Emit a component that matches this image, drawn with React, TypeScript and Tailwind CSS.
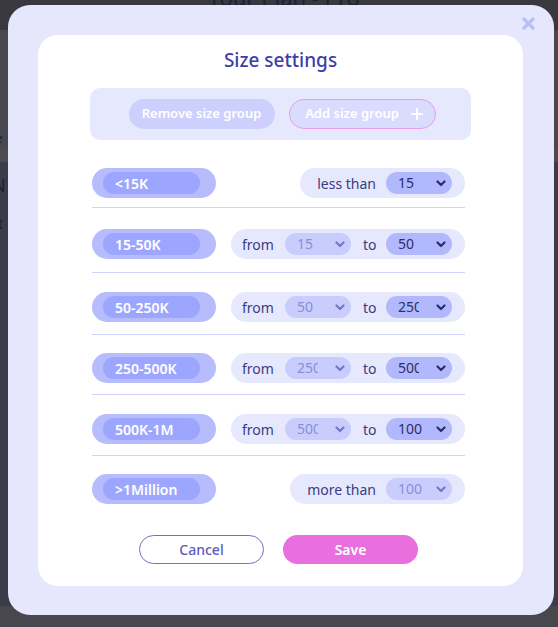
import React from "react";

const font = { fontFamily: '"Noto Sans", "Open Sans", sans-serif' };

function Chevron({ dark }: { dark: boolean }) {
  return (
    <svg width="10" height="7" viewBox="0 0 10 7" className="shrink-0">
      <path
        d="M1.5 1.5 L5 5 L8.5 1.5"
        fill="none"
        stroke={dark ? "#2b2d72" : "#7478cc"}
        strokeWidth="2.2"
        strokeLinecap="round"
        strokeLinejoin="round"
      />
    </svg>
  );
}

function Select({ value, active }: { value: string; active: boolean }) {
  return (
    <div
      className={
        "flex h-[22px] w-[66px] shrink-0 items-center justify-between rounded-full pl-[12px] pr-[6px] " +
        (active ? "bg-[#b2b8fc] text-[#2c2e6e]" : "bg-[#c9cdfd] text-[#8a8ed6]")
      }
    >
      <div
        className={
          "overflow-hidden whitespace-nowrap text-[14px] leading-[22px] " +
          (value === "100" ? "w-[25px]" : "w-[21px]")
        }
      >
        {value}
      </div>
      <Chevron dark={active} />
    </div>
  );
}

function Label({ text }: { text: string }) {
  return (
    <div className="flex h-[30px] w-[124px] shrink-0 items-center rounded-full bg-[#b6bcfc] pl-[11px]">
      <div className="flex h-[22px] w-[97px] items-center rounded-full bg-[#9da6fe] pl-[12px] text-[14px] font-semibold text-white">
        {text}
      </div>
    </div>
  );
}

type Row =
  | { label: string; kind: "less"; to: string; pb: string; mb: string }
  | { label: string; kind: "range"; from: string; to: string; pb: string; mb: string }
  | { label: string; kind: "more"; from: string; pb: string; mb: string };

const rows: Row[] = [
  { label: "<15K", kind: "less", to: "15", pb: "pb-[9px]", mb: "mb-[21px]" },
  { label: "15-50K", kind: "range", from: "15", to: "50", pb: "pb-[13px]", mb: "mb-[19px]" },
  { label: "50-250K", kind: "range", from: "50", to: "250", pb: "pb-[12px]", mb: "mb-[18px]" },
  { label: "250-500K", kind: "range", from: "250", to: "500", pb: "pb-[11px]", mb: "mb-[19px]" },
  { label: "500K-1M", kind: "range", from: "500", to: "100", pb: "pb-[11px]", mb: "mb-[18px]" },
  { label: ">1Million", kind: "more", from: "100", pb: "", mb: "" },
];

function RowView({ row, last }: { row: Row; last: boolean }) {
  return (
    <div className={last ? "" : "border-b border-[#cfd3fb] " + row.pb + " " + row.mb}>
      <div className="flex h-[30px] items-center justify-between">
        <Label text={row.label} />
        {row.kind === "range" ? (
          <div className="flex h-[30px] w-[234px] items-center rounded-full bg-[#e6e8fd] pl-[11px] pr-[13px] text-[14px] text-[#3b3c84]">
            <span className="w-[31px]">from</span>
            <span className="ml-[12px]">
              <Select value={row.from} active={false} />
            </span>
            <span className="ml-[12px] w-[13px]">to</span>
            <span className="ml-[10px]">
              <Select value={row.to} active={true} />
            </span>
          </div>
        ) : (
          <div className="flex h-[30px] items-center rounded-full bg-[#e6e8fd] pl-[17px] pr-[13px] text-[14px] text-[#3b3c84]">
            <span>{row.kind === "less" ? "less than" : "more than"}</span>
            <span className="ml-[10px]">
              {row.kind === "less" ? (
                <Select value={row.to} active={true} />
              ) : (
                <Select value={row.from} active={false} />
              )}
            </span>
          </div>
        )}
      </div>
    </div>
  );
}

export default function App() {
  return (
    <div className="relative h-[627px] w-[558px] overflow-hidden bg-[#47474d]" style={font}>
      {/* background page (dimmed) */}
      <div className="flex h-[30px] justify-center bg-[#38383e]">
        <div className="-mt-[14px] pl-[10px] text-[22px] leading-[22px] text-[#202036]">Your Plan - Pro</div>
      </div>
      <div className="flex flex-col text-[#1e1f3a]">
        <div className="h-[97px]" />
        <div className="-ml-[6px] text-[15px] leading-[20px]">e</div>
        <div className="h-[15px] bg-[#4b4b4f]" />
        <div className="flex h-[444px] flex-col bg-[#3b3c4a] pt-[10px]">
          <div className="-ml-[8px] text-[18px]">N</div>
          <div className="-ml-[2px] mt-[14px] text-[14px]">t</div>
        </div>
      </div>

      {/* modal overlay */}
      <div className="absolute left-[8px] top-[5px] h-[610px] w-[546px] rounded-[22px] bg-[#e6e7fd] pl-[30px] pt-[30px]">
        <div className="absolute right-[19px] top-[12px] text-[#b8befa]">
          <svg width="13" height="13" viewBox="0 0 13 13">
            <path d="M2 2 L11 11 M11 2 L2 11" stroke="#b8befa" strokeWidth="3.2" strokeLinecap="round" />
          </svg>
        </div>
        <div className="flex h-[551px] w-[485px] flex-col rounded-[20px] bg-white pt-[12px]">
          <div className="text-center text-[19px] font-medium leading-[26px] text-[#3d3ea9]">Size settings</div>
          <div className="mx-[52px] mt-[15px] flex h-[52px] items-center justify-center gap-[14px] rounded-[10px] bg-[#e6e8fd] pl-[3px]">
            <div className="flex h-[30px] w-[146px] items-center justify-center rounded-full bg-[#cdd0fc] text-[13px] font-semibold text-white">
              Remove size group
            </div>
            <div className="flex h-[30px] w-[147px] items-center justify-center gap-[12px] rounded-full border border-[#e79de8] bg-[#dadcfd] pl-[4px] text-[13px] font-semibold text-white">
              <span>Add size group</span>
              <svg width="12" height="12" viewBox="0 0 12 12">
                <path d="M6 1 V11 M1 6 H11" stroke="white" strokeWidth="2" strokeLinecap="round" />
              </svg>
            </div>
          </div>
          <div className="ml-[54px] mt-[28px] w-[373px]">
            {rows.map((r, i) => (
              <RowView key={r.label} row={r} last={i === rows.length - 1} />
            ))}
          </div>
          <div className="mt-[31px] flex justify-center gap-[19px] pr-[4px]">
            <div className="flex h-[29px] w-[125px] items-center justify-center rounded-full border border-[#6d71c9] text-[14px] font-medium text-[#5a5db7]">
              Cancel
            </div>
            <div className="flex h-[29px] w-[135px] items-center justify-center rounded-full bg-[#e96fde] text-[14px] font-semibold text-white">
              Save
            </div>
          </div>
        </div>
      </div>
    </div>
  );
}
